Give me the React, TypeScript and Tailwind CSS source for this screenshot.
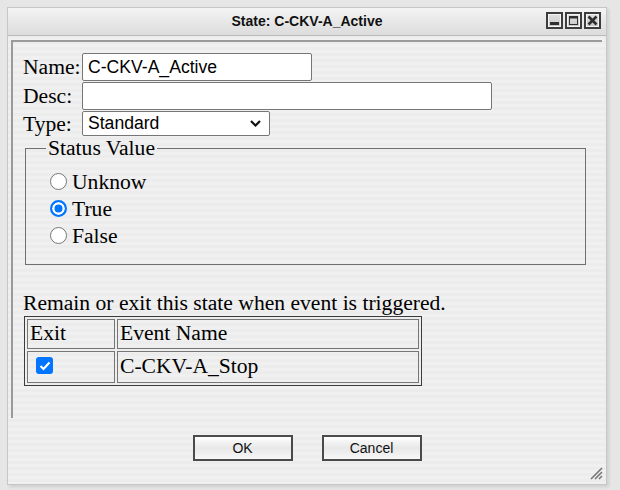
const serif = "font-['Liberation_Serif','Times_New_Roman',serif]";
const sans = "font-['Liberation_Sans',Arial,sans-serif]";

const TitleButton = ({ kind }: { kind: "min" | "max" | "close" }) => (
  <svg width="17" height="17" viewBox="0 0 17 17">
    <defs>
      <linearGradient id={`tb-${kind}`} x1="0" y1="0" x2="0" y2="1">
        <stop offset="0" stopColor="#e4e4e4" />
        <stop offset="1" stopColor="#c4c4c4" />
      </linearGradient>
    </defs>
    <rect x="1" y="1" width="15" height="15" fill={`url(#tb-${kind})`} stroke="#3d3d3d" strokeWidth="2" />
    <rect x="2.5" y="2.5" width="12" height="12" fill="none" stroke="#f4f4f4" strokeWidth="1" />
    {kind === "min" && <rect x="4" y="10" width="9" height="3" fill="#2f2f2f" />}
    {kind === "max" && (
      <>
        <rect x="4.5" y="4.5" width="8" height="8" fill="none" stroke="#2f2f2f" strokeWidth="1" />
        <rect x="4" y="4" width="9" height="2.5" fill="#2f2f2f" />
      </>
    )}
    {kind === "close" && (
      <path d="M4.5 4.5 L12.5 12.5 M12.5 4.5 L4.5 12.5" stroke="#2f2f2f" strokeWidth="2.6" />
    )}
  </svg>
);

const Radio = ({ label, checked }: { label: string; checked?: boolean }) => (
  <label className="flex h-[27px] items-center">
    <input
      type="radio"
      name="status"
      defaultChecked={checked}
      className="m-0 ml-[4px] h-[17px] w-[17px] appearance-none rounded-full border border-[#767676] bg-white checked:border-2 checked:border-[#0075ff] checked:bg-[#0075ff] checked:shadow-[inset_0_0_0_2.5px_#fff]"
    />
    <span className="ml-[5px] leading-[24px]">{label}</span>
  </label>
);

export default function App() {
  return (
    <div className="min-h-[490px] w-[620px] bg-[#e6e6e6] pl-[7px] pt-[7px]">
      <div className="relative flex h-[478px] w-[600px] flex-col border border-[#c6c6c6] bg-[repeating-linear-gradient(180deg,#f0f0f0_0px,#f0f0f0_3px,#ececec_3px,#ececec_6px)] shadow-[2px_2px_3px_rgba(0,0,0,0.10)]">
        {/* title bar */}
        <div className="relative flex h-[28px] items-center justify-center border-b border-[#b9b9b9] bg-linear-to-b from-[#f4f4f4] to-[#dcdcdc]">
          <span className={`${sans} text-[14px] font-bold text-[#111]`}>State: C-CKV-A_Active</span>
          <div className="absolute right-[5px] top-[4px] flex gap-[2px]">
            <TitleButton kind="min" />
            <TitleButton kind="max" />
            <TitleButton kind="close" />
          </div>
        </div>

        {/* content frame */}
        <div className={`${serif} ml-[3px] mt-[4px] h-[378px] w-[591px] border-l-2 border-t-2 border-[#9a9a9a] pl-[10px] pt-[11px] text-[21.6px] text-black`}>
          <div className="flex flex-col gap-[1px]">
            <div className="flex items-center">
              <span className="w-[59px] leading-[24px]">Name:</span>
              <input
                defaultValue="C-CKV-A_Active"
                className={`${sans} h-[28px] w-[230px] rounded-[2px] border border-[#767676] bg-white px-[5px] text-[17.6px] outline-none`}
              />
            </div>
            <div className="flex items-center">
              <span className="w-[59px] leading-[24px]">Desc:</span>
              <input className={`${sans} h-[28px] w-[410px] rounded-[2px] border border-[#767676] bg-white px-[5px] text-[17.6px] outline-none`} />
            </div>
            <div className="flex items-center">
              <span className="w-[59px] leading-[24px]">Type:</span>
              <div className="relative flex">
                <select
                  defaultValue="Standard"
                  className={`${sans} h-[25px] w-[188px] appearance-none rounded-[2px] border border-[#767676] bg-white pl-[5px] text-[17.6px] leading-[23px] outline-none`}
                >
                  <option>Standard</option>
                  <option>Initial</option>
                  <option>Final</option>
                </select>
                <svg className="pointer-events-none absolute right-[9px] top-[9px]" width="11" height="7" viewBox="0 0 11 7">
                  <path d="M1 1 L5.5 5.5 L10 1" fill="none" stroke="#111" strokeWidth="2.2" />
                </svg>
              </div>
            </div>
          </div>

          <fieldset className="ml-[2px] w-[561px] border border-[#707070] px-[20px] pb-[15px]">
            <legend className="px-[2px] leading-[24px]">Status Value</legend>
            <div className="flex flex-col pt-[8px]">
              <Radio label="Unknow" />
              <Radio label="True" checked />
              <Radio label="False" />
            </div>
          </fieldset>

          <p className="mt-[26px] leading-[24px]">Remain or exit this state when event is triggered.</p>
          <table className="ml-[1px] mt-[1px] border-separate border-spacing-[2px] border border-[#3c3c3c]">
            <tbody>
              <tr>
                <td className="h-[30px] w-[88px] border border-[#767676] px-[2px] pt-[1px] align-top leading-[24px]">Exit</td>
                <td className="h-[30px] w-[302px] border border-[#767676] px-[2px] pt-[1px] align-top leading-[24px]">Event Name</td>
              </tr>
              <tr>
                <td className="h-[32px] border border-[#767676] px-[2px] align-top">
                  <span className="ml-[6px] mt-[5px] flex h-[17px] w-[17px] items-center justify-center rounded-[3px] bg-[#0075ff]">
                    <svg width="12" height="10" viewBox="0 0 12 10">
                      <path d="M1.5 5 L4.5 8 L10.5 1.5" fill="none" stroke="#fff" strokeWidth="2.2" />
                    </svg>
                  </span>
                </td>
                <td className="h-[32px] border border-[#767676] px-[2px] pt-[2px] align-top leading-[24px]">C-CKV-A_Stop</td>
              </tr>
            </tbody>
          </table>
        </div>

        {/* buttons */}
        <div className={`${sans} mt-[17px] flex justify-center gap-[29px] text-[14px]`}>
          <button className="h-[26px] w-[100px] border-2 border-[#4a4a4a] bg-linear-to-b from-[#fdfdfd] via-[#e8e8e8] to-[#f7f7f7] text-[#111]">OK</button>
          <button className="h-[26px] w-[100px] border-2 border-[#4a4a4a] bg-linear-to-b from-[#fdfdfd] via-[#e8e8e8] to-[#f7f7f7] text-[#111]">Cancel</button>
        </div>

        {/* resize grip */}
        <svg className="absolute bottom-[4px] right-[3px]" width="15" height="15" viewBox="0 0 15 15">
          <path d="M14 3 L3 14 M14 7 L7 14 M14 11 L11 14" stroke="#777" strokeWidth="1.6" />
        </svg>
      </div>
    </div>
  );
}
